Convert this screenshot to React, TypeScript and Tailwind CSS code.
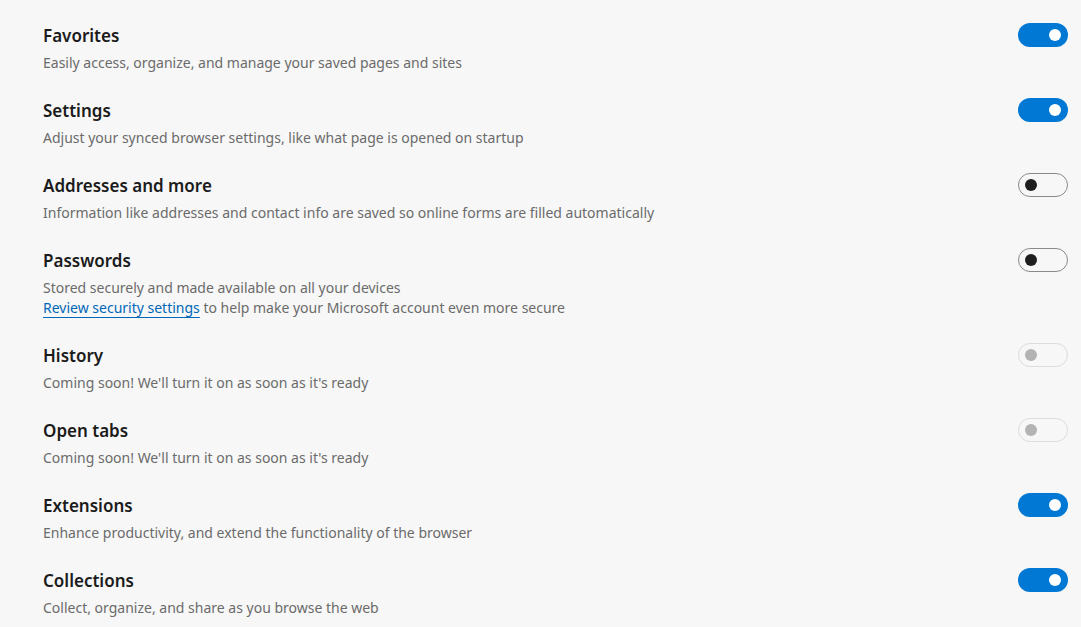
import React from 'react';

type Row = {
  title: string;
  desc: string;
  state: 'on' | 'off' | 'disabled';
  link?: boolean;
};

const rows: Row[] = [
  { title: 'Favorites', desc: 'Easily access, organize, and manage your saved pages and sites', state: 'on' },
  { title: 'Settings', desc: 'Adjust your synced browser settings, like what page is opened on startup', state: 'on' },
  { title: 'Addresses and more', desc: 'Information like addresses and contact info are saved so online forms are filled automatically', state: 'off' },
  { title: 'Passwords', desc: 'Stored securely and made available on all your devices', state: 'off', link: true },
  { title: 'History', desc: "Coming soon! We'll turn it on as soon as it's ready", state: 'disabled' },
  { title: 'Open tabs', desc: "Coming soon! We'll turn it on as soon as it's ready", state: 'disabled' },
  { title: 'Extensions', desc: 'Enhance productivity, and extend the functionality of the browser', state: 'on' },
  { title: 'Collections', desc: 'Collect, organize, and share as you browse the web', state: 'on' },
];

const Toggle: React.FC<{ state: Row['state'] }> = ({ state }) => {
  if (state === 'on') {
    return (
      <div className="flex h-[24px] w-[50px] shrink-0 items-center justify-end rounded-full bg-[#0078d4] pr-[7px]">
        <div className="h-[12px] w-[12px] rounded-full bg-white" />
      </div>
    );
  }
  if (state === 'off') {
    return (
      <div className="flex h-[24px] w-[50px] shrink-0 items-center rounded-full border border-[#8a8a8a] pl-[6px]">
        <div className="h-[12px] w-[12px] rounded-full bg-[#1f1f1f]" />
      </div>
    );
  }
  return (
    <div className="flex h-[24px] w-[50px] shrink-0 items-center rounded-full border border-[#dcdcdc] pl-[6px]">
      <div className="h-[12px] w-[12px] rounded-full bg-[#b3b3b3]" />
    </div>
  );
};

export default function App() {
  return (
    <div
      className="min-h-[627px] w-full bg-[#f7f7f7] pl-[43px] pr-[13px] pt-[23px]"
      style={{ fontFamily: '"Noto Sans", "Open Sans", sans-serif' }}
    >
      {rows.map((r) => (
        <div key={r.title} className="mb-[25px] flex items-start justify-between">
          <div className="pt-[1px]">
            <div className="text-[17px] font-semibold leading-[24px] text-[#1b1b1b]">{r.title}</div>
            <div className="mt-[5px] text-[14px] leading-[20px] text-[#6b6b6b]">
              {r.desc}
              {r.link && (
                <div>
                  <a href="#" className="text-[#0067b8] underline decoration-[#0067b8] underline-offset-[4px]">
                    Review security settings
                  </a>{' '}
                  to help make your Microsoft account even more secure
                </div>
              )}
            </div>
          </div>
          <Toggle state={r.state} />
        </div>
      ))}
    </div>
  );
}
